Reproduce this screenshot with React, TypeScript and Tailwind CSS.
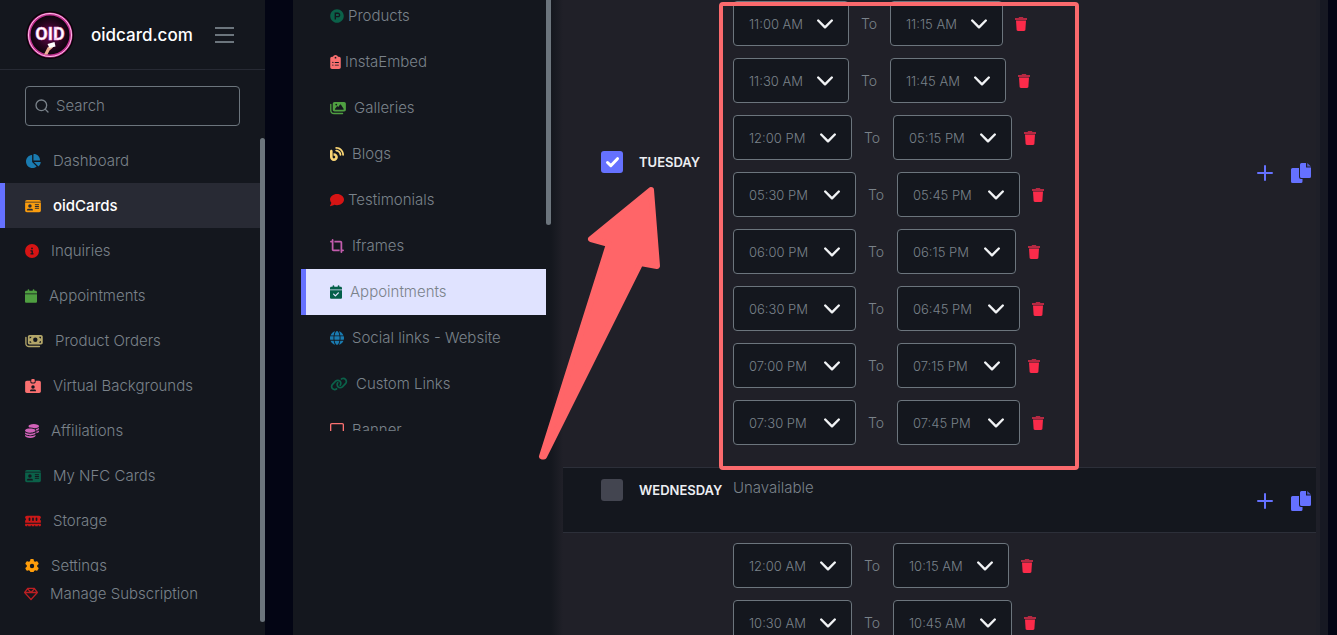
import type { IconType } from "react-icons"
import {
  FaBlog, FaCalendar, FaCalendarCheck, FaChartPie, FaCircleInfo, FaClipboardList, FaCoins,
  FaComment, FaCropSimple, FaGear, FaGlobe, FaIdCard, FaIdCardClip, FaImages, FaLink,
  FaMemory, FaMoneyBills, FaProductHunt, FaRegGem, FaRegMessage,
} from "react-icons/fa6"
import { Search } from "lucide-react"
import clsx from "clsx"

type MenuItem = { label: string; icon: IconType; style: string; gap?: string }
type Slot = { from: string; to: string; fromWidth: string; toWidth: string }

const mainMenu: MenuItem[] = [
  { label: "Dashboard", icon: FaChartPie, style: "w-4 text-[#1a7bb0]" },
  { label: "oidCards", icon: FaIdCard, style: "w-4 text-[#fb9d0e]" },
  { label: "Inquiries", icon: FaCircleInfo, style: "w-3.5 text-[#d61414]" },
  { label: "Appointments", icon: FaCalendar, style: "w-3 text-[#4f9f41]" },
  { label: "Product Orders", icon: FaMoneyBills, style: "w-[18px] text-[#b3a669]" },
  { label: "Virtual Backgrounds", icon: FaIdCardClip, style: "w-4 text-[#fa7070]" },
  { label: "Affiliations", icon: FaCoins, style: "w-3.5 text-[#d162b8]" },
  { label: "My NFC Cards", icon: FaIdCard, style: "w-4 text-[#0b6149]" },
  { label: "Storage", icon: FaMemory, style: "w-4 text-[#cb1818]" },
  { label: "Settings", icon: FaGear, style: "w-3.5 text-[#ff9d0a]" },
]

const cardMenu: MenuItem[] = [
  { label: "Products", icon: FaProductHunt, style: "w-3.5 text-[#0b6149]", gap: "gap-1" },
  { label: "InstaEmbed", icon: FaClipboardList, style: "w-[11px] text-[#fa7070]", gap: "gap-1" },
  { label: "Galleries", icon: FaImages, style: "w-4 text-[#4f9f41]", gap: "gap-2" },
  { label: "Blogs", icon: FaBlog, style: "w-3.5 text-[#fbd675]", gap: "gap-2" },
  { label: "Testimonials", icon: FaComment, style: "w-3.5 text-[#d61414]", gap: "gap-1" },
  { label: "Iframes", icon: FaCropSimple, style: "w-3.5 text-[#c35cad]", gap: "gap-2" },
  { label: "Appointments", icon: FaCalendarCheck, style: "w-3 text-[#04604a]", gap: "gap-2" },
  { label: "Social links - Website", icon: FaGlobe, style: "w-3.5 text-[#1a7bb0]", gap: "gap-2" },
  { label: "Custom Links", icon: FaLink, style: "w-[18px] text-[#0b6149]", gap: "gap-2" },
  { label: "Banner", icon: FaRegMessage, style: "w-3.5 text-[#fa7070]", gap: "gap-2" },
]

const tuesday: Slot[] = [
  { from: "11:00 AM", to: "11:15 AM", fromWidth: "w-[116px]", toWidth: "w-[113px]" },
  { from: "11:30 AM", to: "11:45 AM", fromWidth: "w-[116px]", toWidth: "w-[116px]" },
  { from: "12:00 PM", to: "05:15 PM", fromWidth: "w-[119px]", toWidth: "w-[119px]" },
  { from: "05:30 PM", to: "05:45 PM", fromWidth: "w-[123px]", toWidth: "w-[123px]" },
  { from: "06:00 PM", to: "06:15 PM", fromWidth: "w-[123px]", toWidth: "w-[119px]" },
  { from: "06:30 PM", to: "06:45 PM", fromWidth: "w-[123px]", toWidth: "w-[123px]" },
  { from: "07:00 PM", to: "07:15 PM", fromWidth: "w-[123px]", toWidth: "w-[119px]" },
  { from: "07:30 PM", to: "07:45 PM", fromWidth: "w-[123px]", toWidth: "w-[123px]" },
]

const thursday: Slot[] = [
  { from: "12:00 AM", to: "10:15 AM", fromWidth: "w-[119px]", toWidth: "w-[116px]" },
  { from: "10:30 AM", to: "10:45 AM", fromWidth: "w-[119px]", toWidth: "w-[119px]" },
]

const Logo = () => (
  <svg viewBox="0 0 48 48" className="size-12 shrink-0">
    <defs>
      <radialGradient id="glow">
        <stop offset="0" stopColor="#6d0a52" />
        <stop offset="0.6" stopColor="#2a0521" />
        <stop offset="1" stopColor="#08040a" />
      </radialGradient>
    </defs>
    <circle cx="24" cy="24" r="24" fill="#0a0509" />
    <circle cx="24" cy="24" r="21" fill="url(#glow)" stroke="#c0308f" strokeWidth="3" />
    <circle cx="24" cy="24" r="21.5" fill="none" stroke="#ffc0ea" strokeWidth="1" />
    <text x="24" y="29" textAnchor="middle" fontFamily="Roboto, sans-serif" fontSize="18" fontWeight="700" fill="#fff" stroke="#f8a5e4" strokeWidth="0.5">OID</text>
    <path d="M18 43.500l3.500-7 3.500-2.500 2 2.500-3.500 3-2 4z" fill="#edb196" />
    <path d="M21.500 33l7-2 1 4.500-6 1.500z" fill="#fff" />
  </svg>
)

const TrashIcon = () => (
  <svg viewBox="0 0 12 14" className="h-3.5 w-3">
    <path d="M0 1h3.500l.6-1h3.800l.6 1H12v2H0z" fill="#b52942" />
    <path d="M1 3.500h10l-.6 9.300c0 .7-.6 1.200-1.300 1.200H2.900c-.7 0-1.300-.5-1.300-1.200z" fill="#fb2b4a" />
  </svg>
)

const CopyIcon = () => (
  <svg viewBox="0 0 20 20" className="size-5" fill="#6571ff">
    <path d="M1.500 5H8v9a2 2 0 0 0 2 2h1.500v2.500A1.500 1.500 0 0 1 10 20H1.500A1.500 1.500 0 0 1 0 18.500v-12A1.500 1.500 0 0 1 1.500 5z" />
    <path d="M10.500 0H15v4.500h5v9a1.500 1.500 0 0 1-1.500 1.500h-8A1.500 1.500 0 0 1 9 13.500v-12A1.500 1.500 0 0 1 10.500 0z" />
    <path d="M16.200 0L20 3.600h-3.800z" opacity=".75" />
  </svg>
)

const TimeSelect = ({ value, width, label }: { value: string; width: string; label: string }) => (
  <div className={clsx("relative h-[45px]", width)}>
    <select aria-label={label} className="h-full w-full appearance-none rounded border border-[#6c757d] bg-[#14171e] px-[15px] text-[13px] font-light text-[#7a828a]">
      <option>{value}</option>
    </select>
    <svg viewBox="0 0 16 10" className="pointer-events-none absolute top-[18px] right-4 h-2.5 w-4" fill="none" stroke="#f1f3f5" strokeWidth="2.4" strokeLinecap="round" strokeLinejoin="round">
      <path d="M1.200 1.500L8 8.300l6.800-6.800" />
    </svg>
  </div>
)

const Slots = ({ day, slots }: { day: string; slots: Slot[] }) => (
  <div className="flex flex-col gap-3">
    {slots.map((slot) => (
      <div key={slot.from} className="flex items-center gap-3">
        <TimeSelect value={slot.from} width={slot.fromWidth} label={`${day} from ${slot.from}`} />
        <span className="w-[17px] text-sm font-light">To</span>
        <TimeSelect value={slot.to} width={slot.toWidth} label={`${day} to ${slot.to}`} />
        <button aria-label={`Delete ${slot.from}`}>
          <TrashIcon />
        </button>
      </div>
    ))}
  </div>
)

const DayCheck = ({ day, checked }: { day: string; checked: boolean }) => (
  <div className="flex w-[132px] shrink-0 items-center gap-4">
    <div className="relative size-[22px] shrink-0">
      <input id={day} type="checkbox" defaultChecked={checked} className="peer block size-full appearance-none rounded-[3px] bg-[#434550] checked:bg-[#6571ff]" />
      <svg viewBox="0 0 22 22" className="pointer-events-none absolute inset-0 hidden peer-checked:block" fill="none" stroke="#fff" strokeWidth="3" strokeLinecap="round" strokeLinejoin="round">
        <path d="M6.500 11.500l3.300 3.200 6.700-7" />
      </svg>
    </div>
    <label htmlFor={day} className="text-[13px] leading-5 font-semibold text-[#eceef2]">{day}</label>
  </div>
)

const DayActions = () => (
  <div className="ml-auto flex items-center gap-[18px]">
    <button aria-label="Add slot">
      <svg viewBox="0 0 16 16" className="size-4" stroke="#6571ff" strokeWidth="2" strokeLinecap="round">
        <path d="M8 1v14M1 8h14" />
      </svg>
    </button>
    <button aria-label="Copy slots">
      <CopyIcon />
    </button>
  </div>
)

const Sidebar = () => (
  <aside className="flex w-[265px] shrink-0 flex-col bg-[#14171e]">
    <header className="flex h-[70px] shrink-0 items-center border-b border-[#272a34] pl-[26px]">
      <Logo />
      <a href="#" className="ml-[17px] w-[124px] text-[17px] font-medium text-white">oidcard.com</a>
      <button aria-label="Toggle menu" className="flex flex-col gap-[5px]">
        <span className="h-0.5 w-[19px] bg-[#6c757d]" />
        <span className="h-0.5 w-[19px] bg-[#6c757d]" />
        <span className="h-0.5 w-[19px] bg-[#6c757d]" />
      </button>
    </header>

    <div className="mx-[25px] mt-4 mb-3 flex h-10 shrink-0 items-center gap-1.5 rounded border border-[#6c757d] px-2">
      <Search size={16} strokeWidth={2} className="shrink-0" />
      <input aria-label="Search" placeholder="Search" className="min-w-0 flex-1 bg-transparent text-[15px] font-light outline-none placeholder:text-[#7a828a]" />
    </div>

    <div className="flex min-h-0 flex-1">
      <div className="flex flex-1 flex-col">
        <nav className="min-h-0 flex-1 overflow-hidden">
          {mainMenu.map(({ label, icon: Icon, style }) => (
            <a
              key={label}
              href="#"
              className={clsx(
                "flex h-[45px] items-center gap-3 border-l-[5px] pl-5",
                label === "oidCards" ? "border-[#6571ff] bg-[#282a34] font-medium text-white" : "border-transparent",
              )}
            >
              <Icon className={clsx("h-3.5 shrink-0", style)} />
              {label}
            </a>
          ))}
        </nav>
        <a href="#" className="mb-[19px] flex h-11 shrink-0 items-center gap-3 pl-6">
          <FaRegGem className="size-3.5 text-[#bb1f23]" />
          Manage Subscription
        </a>
      </div>
      <div className="mb-[13px] w-[5px] rounded-full bg-[#6c757d]" />
    </div>
  </aside>
)

const CardMenu = () => (
  <aside className="flex w-[258px] shrink-0 items-start bg-[#14171e] pl-2">
    <nav className="h-[431px] flex-1 overflow-hidden">
      <div className="-mt-[7px]">
        {cardMenu.map(({ label, icon: Icon, style, gap }) => (
          <a
            key={label}
            href="#"
            className={clsx(
              "flex h-[46px] items-center border-l-[5px] pl-6",
              gap,
              label === "Appointments" ? "border-[#6571ff] bg-[#e0e3ff]" : "border-transparent",
            )}
          >
            <Icon className={clsx("h-3.5 shrink-0", style)} />
            {label}
          </a>
        ))}
      </div>
    </nav>
    <div className="h-[225px] w-[5px] rounded-b-full bg-[#6c757d]" />
  </aside>
)

const Schedule = () => (
  <main className="min-w-0 flex-1 overflow-hidden bg-[#202028]">
    <section className="flex pt-px pr-[5px] pb-[22px] pl-[38px]">
      <div className="pt-[150px]">
        <DayCheck day="TUESDAY" checked />
      </div>
      <Slots day="Tuesday" slots={tuesday} />
      <div className="ml-auto pt-[162px]">
        <DayActions />
      </div>
    </section>

    <section className="flex h-[66px] items-start border-y border-[#2c2f39] bg-[#14171e] pr-[5px] pl-[38px]">
      <div className="pt-[11px]">
        <DayCheck day="WEDNESDAY" checked={false} />
      </div>
      <p className="pt-2.5">Unavailable</p>
      <div className="ml-auto pt-[23px]">
        <DayActions />
      </div>
    </section>

    <section className="flex pt-2.5 pl-[170px]">
      <Slots day="Thursday" slots={thursday} />
    </section>
  </main>
)

// Callout marks that point out the Tuesday slots.
const Callouts = () => (
  <>
    <div className="pointer-events-none absolute top-0.5 left-[719px] h-[468px] w-[360px] rounded-sm border-4 border-[#fb6a6d]" />
    <svg viewBox="0 0 130 280" className="pointer-events-none absolute top-[183px] left-[535px] h-[280px] w-[130px]">
      <path d="M116 7L56 56l18 5L7 273.500h2L105.500 80 122 83z" fill="#ff6568" stroke="#ff6568" strokeWidth="6" strokeLinejoin="round" />
    </svg>
  </>
)

export default function App() {
  return (
    <div className="relative flex h-screen overflow-hidden bg-[#030514] font-['Inter','Liberation_Sans',sans-serif] text-[15px] leading-5 font-light text-[#7a828a]">
      <Sidebar />
      <div className="ml-7 flex min-w-0 flex-1">
        <CardMenu />
        <div className="w-3 shrink-0 bg-linear-to-r from-[#14171e] to-[#202028]" />
        <Schedule />
        <div className="w-1 shrink-0 bg-[#1e1f28]" />
        <div className="mr-[9px] w-2 shrink-0 bg-[#171923]" />
      </div>
      <Callouts />
    </div>
  )
}
